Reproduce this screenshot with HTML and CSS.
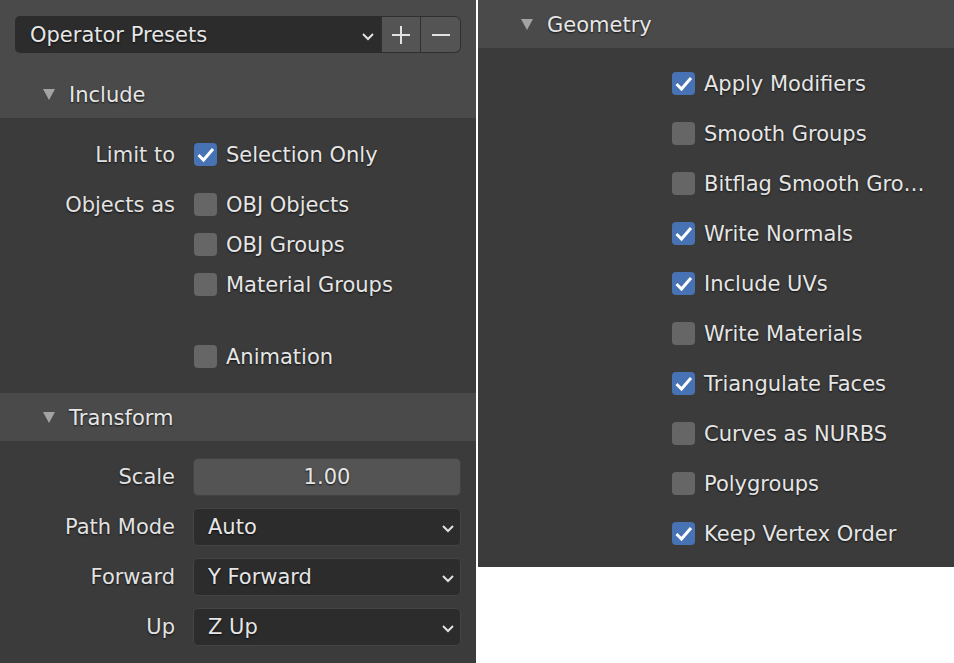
FILE: index.html
```html
<!DOCTYPE html>
<html>
<head>
<meta charset="utf-8">
<link rel="stylesheet" href="styles.css">
</head>
<body>
<div class="app">
  <section class="panel left">
    <div class="top">
      <div class="presets">
        <div class="preset-menu">
          <span>Operator Presets</span>
          <svg class="chev" width="14" height="9" viewBox="0 0 14 9"><polyline points="2,2 7,7 12,2" fill="none" stroke="#e0e0e0" stroke-width="2"/></svg>
        </div>
        <div class="pbtn"><svg width="20" height="20" viewBox="0 0 20 20"><path d="M10 1V19M1 10H19" stroke="#e2e2e2" stroke-width="2"/></svg></div>
        <div class="pbtn last"><svg width="20" height="20" viewBox="0 0 20 20"><path d="M1 10H19" stroke="#e2e2e2" stroke-width="2"/></svg></div>
      </div>
      <div class="phead"><svg class="tri" width="12" height="11" viewBox="0 0 12 11"><polygon points="0,0 12,0 6,11" fill="#a3a3a3"/></svg><span>Include</span></div>
    </div>
    <div class="pbody include">
      <div class="row"><div class="lbl">Limit to</div><div class="cb on"><span class="box"><svg width="23" height="23" viewBox="0 0 23 23"><polyline points="4.5,12 9.5,17 19,6" fill="none" stroke="#fff" stroke-width="3"/></svg></span><span class="txt">Selection Only</span></div></div>
      <div class="row gap10"><div class="lbl">Objects as</div><div class="cb"><span class="box"></span><span class="txt">OBJ Objects</span></div></div>
      <div class="row"><div class="lbl"></div><div class="cb"><span class="box"></span><span class="txt">OBJ Groups</span></div></div>
      <div class="row"><div class="lbl"></div><div class="cb"><span class="box"></span><span class="txt">Material Groups</span></div></div>
      <div class="row gap32"><div class="lbl"></div><div class="cb"><span class="box"></span><span class="txt">Animation</span></div></div>
    </div>
    <div class="phead"><svg class="tri" width="12" height="11" viewBox="0 0 12 11"><polygon points="0,0 12,0 6,11" fill="#a3a3a3"/></svg><span>Transform</span></div>
    <div class="pbody transform">
      <div class="frow"><div class="lbl">Scale</div><div class="field num">1.00</div></div>
      <div class="frow"><div class="lbl">Path Mode</div><div class="field menu"><span>Auto</span><svg class="chev" width="14" height="9" viewBox="0 0 14 9"><polyline points="2,2 7,7 12,2" fill="none" stroke="#e0e0e0" stroke-width="2"/></svg></div></div>
      <div class="frow"><div class="lbl">Forward</div><div class="field menu"><span>Y Forward</span><svg class="chev" width="14" height="9" viewBox="0 0 14 9"><polyline points="2,2 7,7 12,2" fill="none" stroke="#e0e0e0" stroke-width="2"/></svg></div></div>
      <div class="frow"><div class="lbl">Up</div><div class="field menu"><span>Z Up</span><svg class="chev" width="14" height="9" viewBox="0 0 14 9"><polyline points="2,2 7,7 12,2" fill="none" stroke="#e0e0e0" stroke-width="2"/></svg></div></div>
    </div>
  </section>
  <div class="sep"></div>
  <section class="panel right">
    <div class="phead"><svg class="tri" width="12" height="11" viewBox="0 0 12 11"><polygon points="0,0 12,0 6,11" fill="#a3a3a3"/></svg><span>Geometry</span></div>
    <div class="pbody geometry">
      <div class="grow"><div class="lbl"></div><div class="cb on"><span class="box"><svg width="23" height="23" viewBox="0 0 23 23"><polyline points="4.5,12 9.5,17 19,6" fill="none" stroke="#fff" stroke-width="3"/></svg></span><span class="txt">Apply Modifiers</span></div></div>
      <div class="grow"><div class="lbl"></div><div class="cb"><span class="box"></span><span class="txt">Smooth Groups</span></div></div>
      <div class="grow"><div class="lbl"></div><div class="cb"><span class="box"></span><span class="txt">Bitflag Smooth Gro…</span></div></div>
      <div class="grow"><div class="lbl"></div><div class="cb on"><span class="box"><svg width="23" height="23" viewBox="0 0 23 23"><polyline points="4.5,12 9.5,17 19,6" fill="none" stroke="#fff" stroke-width="3"/></svg></span><span class="txt">Write Normals</span></div></div>
      <div class="grow"><div class="lbl"></div><div class="cb on"><span class="box"><svg width="23" height="23" viewBox="0 0 23 23"><polyline points="4.5,12 9.5,17 19,6" fill="none" stroke="#fff" stroke-width="3"/></svg></span><span class="txt">Include UVs</span></div></div>
      <div class="grow"><div class="lbl"></div><div class="cb"><span class="box"></span><span class="txt">Write Materials</span></div></div>
      <div class="grow"><div class="lbl"></div><div class="cb on"><span class="box"><svg width="23" height="23" viewBox="0 0 23 23"><polyline points="4.5,12 9.5,17 19,6" fill="none" stroke="#fff" stroke-width="3"/></svg></span><span class="txt">Triangulate Faces</span></div></div>
      <div class="grow"><div class="lbl"></div><div class="cb"><span class="box"></span><span class="txt">Curves as NURBS</span></div></div>
      <div class="grow"><div class="lbl"></div><div class="cb"><span class="box"></span><span class="txt">Polygroups</span></div></div>
      <div class="grow"><div class="lbl"></div><div class="cb on"><span class="box"><svg width="23" height="23" viewBox="0 0 23 23"><polyline points="4.5,12 9.5,17 19,6" fill="none" stroke="#fff" stroke-width="3"/></svg></span><span class="txt">Keep Vertex Order</span></div></div>
    </div>
  </section>
</div>
</body>
</html>
```

FILE: styles.css
```css
* { box-sizing: border-box; }
html, body { margin: 0; padding: 0; background: #ffffff; }
body {
  font-family: "DejaVu Sans", "Liberation Sans", sans-serif;
  font-size: 21px;
  color: #e6e6e6;
}
.app {
  display: flex;
  align-items: flex-start;
  width: 954px;
  height: 663px;
  overflow: hidden;
}
.panel {
  width: 476px;
  background: #3b3b3b;
  display: flex;
  flex-direction: column;
}
.left { height: 663px; }
.sep { width: 2px; flex: none; }
.right { flex: 1; }

span, .lbl, .field { text-shadow: 0 1px 2px rgba(0,0,0,0.75); }

.top {
  background: #4a4a4a;
  padding-top: 16px;
}
.presets {
  display: flex;
  height: 37px;
  margin: 0 15px 17px 15px;
}
.preset-menu {
  flex: 1;
  background: #2c2c2c;
  border-radius: 5px 0 0 5px;
  display: flex;
  align-items: center;
  justify-content: space-between;
  padding: 0 6px 0 15px;
}
.pbtn {
  width: 40px;
  background: #545454;
  border: 1px solid #303030;
  border-left: none;
  display: flex;
  align-items: center;
  justify-content: center;
}
.pbtn:nth-child(2) { border-left: 1px solid #303030; }
.pbtn.last { border-radius: 0 6px 6px 0; }

.phead {
  height: 48px;
  background: #4a4a4a;
  display: flex;
  align-items: center;
  padding-left: 43px;
}
.phead span { padding-top: 2px; }
.top .phead { background: transparent; }
.tri { margin-right: 14px; margin-top: 1px; flex: none; }

.include { padding: 16px 0 17px; }
.row, .grow {
  display: grid;
  grid-template-columns: 175px 1fr;
  column-gap: 19px;
  height: 40px;
  align-items: center;
}
.gap10 { margin-top: 10px; }
.gap32 { margin-top: 32px; }
.lbl { text-align: right; color: #e2e2e2; padding-top: 2px; }
.frow .lbl { padding-top: 0; }
.cb {
  display: flex;
  align-items: center;
  gap: 9px;
  white-space: nowrap;
}
.txt { padding-top: 2px; }
.box {
  width: 23px;
  height: 23px;
  border-radius: 4px;
  background: #666666;
  flex: none;
  display: block;
}
.box svg { display: block; }
.cb.on .box { background: #4772b3; }

.transform { padding-top: 17px; display: flex; flex-direction: column; gap: 12px; }
.frow {
  display: grid;
  grid-template-columns: 175px 1fr;
  column-gap: 18px;
  height: 38px;
  align-items: center;
  padding-right: 15px;
}
.field {
  height: 38px;
  border-radius: 5px;
  border: 1px solid #444444;
  display: flex;
  align-items: center;
}
.num {
  background: #545454;
  justify-content: center;
  border-color: #424242;
}
.menu {
  background: #2c2c2c;
  justify-content: space-between;
  padding: 0 5px 0 14px;
}
.chev { flex: none; margin-top: 3px; }

.geometry { padding: 15px 0 14px; display: flex; flex-direction: column; gap: 10px; }
```
